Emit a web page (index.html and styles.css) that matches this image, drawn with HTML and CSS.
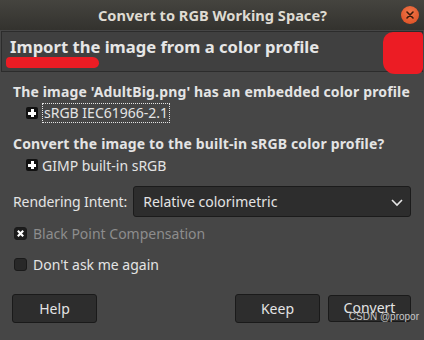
FILE: index.html
```html
<!DOCTYPE html>
<html lang="en">
<head>
  <meta charset="UTF-8" />
  <title>Convert to RGB Working Space?</title>
  <link rel="stylesheet" href="styles.css">
</head>
<body>
  <div class="window">
    <header class="titlebar">
      <span class="title">Convert to RGB Working Space?</span>
      <span class="close">
        <svg width="10" height="10" viewBox="0 0 10 10"><path d="M2 2 L8 8 M8 2 L2 8" stroke="#3a1a0a" stroke-width="1.6" stroke-linecap="round"/></svg>
      </span>
    </header>

    <div class="banner">
      <h1>Import the image from a color profile</h1>
      <span class="scribble"></span>
      <span class="blot"></span>
    </div>

    <main class="content">
      <p class="heading">The image 'AdultBig.png' has an embedded color profile</p>
      <div class="expander">
        <span class="plus"></span>
        <span class="focus">sRGB IEC61966-2.1</span>
      </div>

      <p class="heading">Convert the image to the built-in sRGB color profile?</p>
      <div class="expander">
        <span class="plus"></span>
        <span>GIMP built-in sRGB</span>
      </div>

      <div class="intent">
        <label>Rendering Intent:</label>
        <div class="combo">
          <span>Relative colorimetric</span>
          <svg width="14" height="10" viewBox="0 0 14 10"><path d="M2 3 L7 8 L12 3" fill="none" stroke="#e6e6e6" stroke-width="1.6"/></svg>
        </div>
      </div>

      <div class="check disabled">
        <span class="box checked">
          <svg width="9" height="9" viewBox="0 0 10 10"><path d="M2 2 L8 8 M8 2 L2 8" stroke="#fff" stroke-width="2.4"/></svg>
        </span>
        <span>Black Point Compensation</span>
      </div>
      <div class="check">
        <span class="box"></span>
        <span>Don't ask me again</span>
      </div>
    </main>

    <footer class="actions">
      <button class="btn">Help</button>
      <div class="spacer"></div>
      <button class="btn">Keep</button>
      <button class="btn convert">Convert</button>
    </footer>
    <span class="watermark">CSDN @propor</span>
  </div>
</body>
</html>
```

FILE: styles.css
```css
* {
  margin: 0;
  padding: 0;
  box-sizing: border-box;
}

body {
  background: #464646;
  font-family: "Noto Sans", sans-serif;
  color: #e4e4e4;
  width: 424px;
  height: 340px;
  overflow: hidden;
}

.window {
  position: relative;
  height: 340px;
}

.titlebar {
  height: 30px;
  background: linear-gradient(to bottom, #45443f, #33322e);
  display: flex;
  align-items: center;
  justify-content: center;
  position: relative;
}

.title {
  font-size: 14.6px;
  font-weight: bold;
  color: #dfdbd2;
  margin-left: 1px;
}

.close {
  position: absolute;
  right: 5px;
  top: 6px;
  width: 18px;
  height: 18px;
  border-radius: 50%;
  background: radial-gradient(circle at 50% 35%, #f0774a, #dc4a1e);
  display: flex;
  align-items: center;
  justify-content: center;
}

.banner {
  position: relative;
  margin: 1px 1px 0;
  height: 41px;
  background: #404040;
  border: 1px solid #2c2c2c;
  padding: 3px 8px;
}

.banner h1 {
  font-size: 16.6px;
  font-weight: bold;
  color: #e6e6e6;
}

.scribble {
  position: absolute;
  left: 4px;
  top: 25px;
  width: 93px;
  height: 11px;
  background: #ec1c24;
  border-radius: 5px 8px 6px 5px;
}

.blot {
  position: absolute;
  right: -1px;
  top: 0;
  width: 40px;
  height: 42px;
  background: #ec1c24;
  border-radius: 10px 4px 6px 12px;
}

.content {
  padding: 10px 13px 0;
  font-size: 14px;
}

.heading {
  font-weight: bold;
  margin-bottom: 2px;
  letter-spacing: 0.15px;
}

.expander {
  display: flex;
  align-items: center;
  gap: 4px;
  padding-left: 13px;
  height: 20px;
  margin-bottom: 11px;
}

.plus {
  width: 12px;
  height: 12px;
  background: #111;
  border-radius: 2px;
  position: relative;
}

.plus::before,
.plus::after {
  content: "";
  position: absolute;
  background: #fff;
}

.plus::before {
  left: 2px;
  top: 4.5px;
  width: 8px;
  height: 3px;
}

.plus::after {
  left: 4.5px;
  top: 2px;
  width: 3px;
  height: 8px;
}

.focus {
  border: 1px dotted #e4e4e4;
  padding: 0 1px;
  line-height: 18px;
}

.intent {
  display: flex;
  align-items: center;
  gap: 6px;
  margin-top: 10px;
}

.intent label {
  letter-spacing: -0.1px;
}

.combo {
  flex: 1;
  height: 31px;
  background: #2d2d2d;
  border: 1px solid #1b1b1b;
  border-radius: 3px;
  display: flex;
  align-items: center;
  justify-content: space-between;
  padding: 0 6px 0 9px;
}

.check {
  display: flex;
  align-items: center;
  gap: 6px;
  height: 20px;
  margin-top: 6px;
  padding-left: 1px;
}

.check + .check {
  margin-top: 11px;
}

.check.disabled {
  color: #8d8d8d;
}

.box {
  width: 13px;
  height: 13px;
  background: #282828;
  border: 1px solid #1a1a1a;
  border-radius: 3px;
  display: flex;
  align-items: center;
  justify-content: center;
}

.box.checked {
  background: #1c1c1c;
}

.actions {
  display: flex;
  padding: 20px 13px 0 12px;
  gap: 8px;
}

.spacer {
  flex: 1;
}

.btn {
  width: 85px;
  height: 29px;
  background: #2d2d2d;
  border: 1px solid #1a1a1a;
  border-radius: 3px;
  color: #e4e4e4;
  font-family: "Noto Sans", sans-serif;
  font-size: 14px;
  padding-bottom: 1px;
}

.convert {
  width: 83px;
  height: 27px;
  margin-top: 1px;
  padding-bottom: 3px;
}

.watermark {
  position: absolute;
  right: 5px;
  top: 311px;
  font-family: "Liberation Sans", sans-serif;
  font-size: 10px;
  color: #c8c8c8;
}
```
